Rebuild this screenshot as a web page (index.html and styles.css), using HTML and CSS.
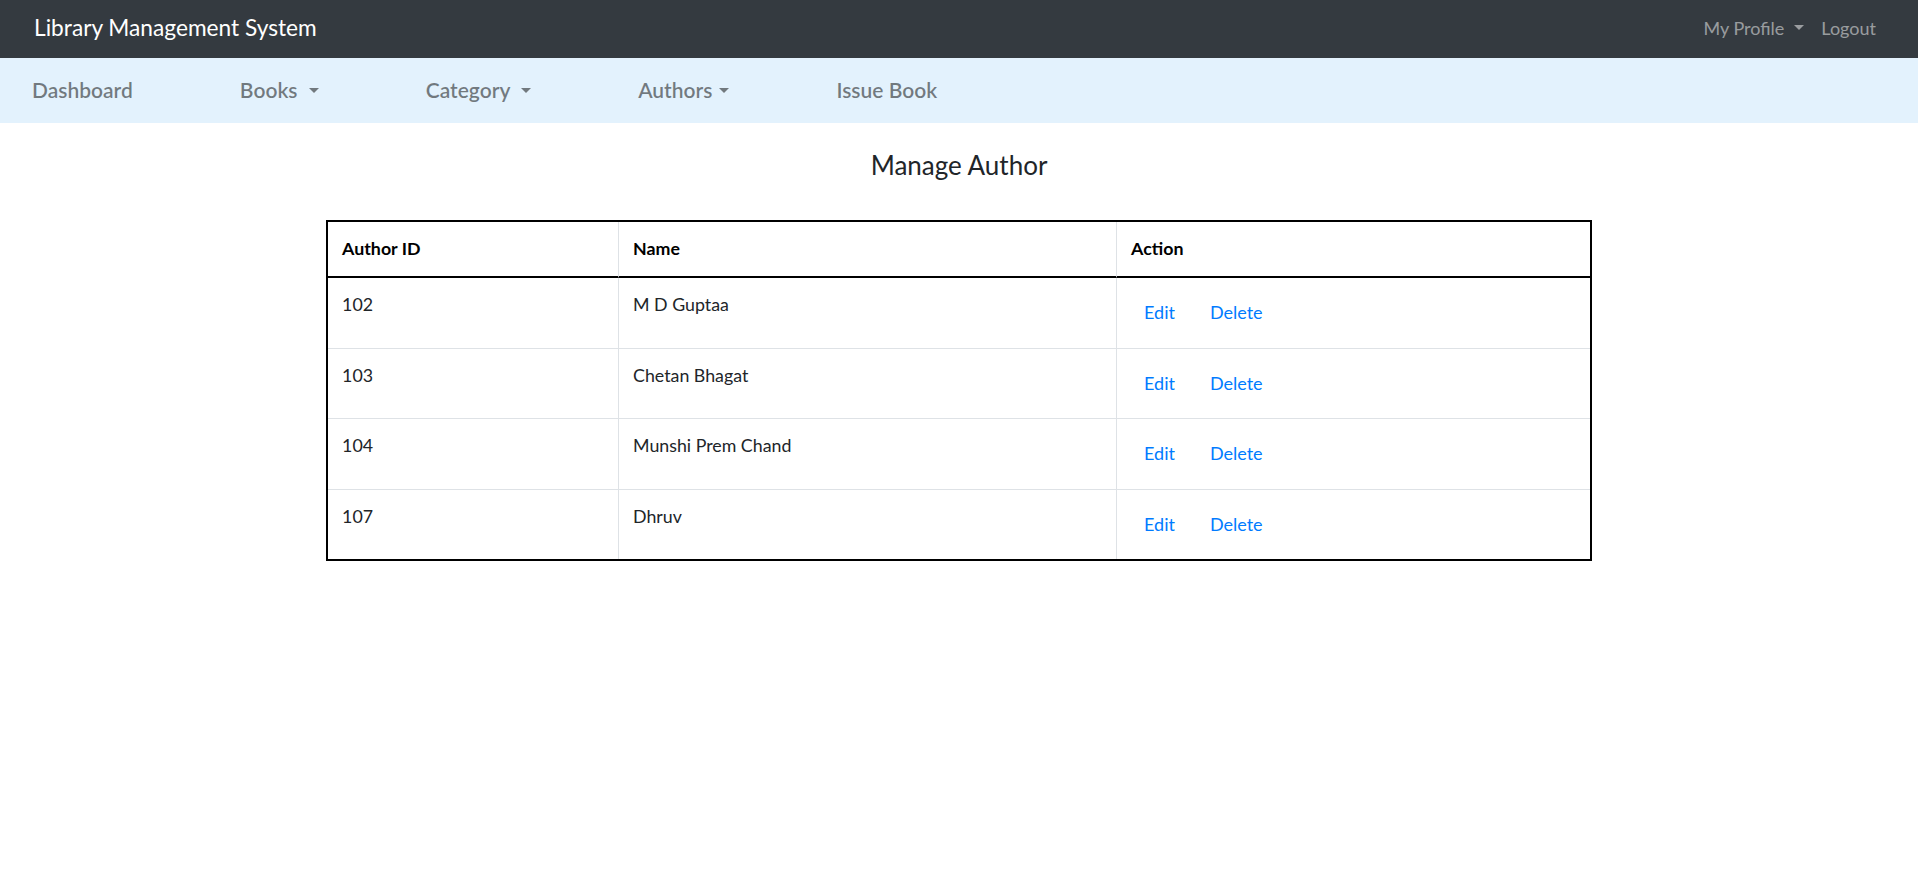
FILE: index.html
```html
<!DOCTYPE html>
<html lang="en">
<head>
<meta charset="utf-8">
<title>Manage Author</title>
<link rel="stylesheet" href="styles.css">
</head>
<body>
<header class="topbar">
  <a class="brand" href="#">Library Management System</a>
  <nav class="user-nav">
    <a class="user-link" href="#">My Profile<span class="caret caret-light"></span></a>
    <a class="user-link" href="#">Logout</a>
  </nav>
</header>
<nav class="menubar">
  <a class="menu-link" href="#">Dashboard</a>
  <a class="menu-link" href="#">Books <span class="caret"></span></a>
  <a class="menu-link" href="#">Category <span class="caret"></span></a>
  <a class="menu-link" href="#">Authors<span class="caret caret-tight"></span></a>
  <a class="menu-link" href="#">Issue Book</a>
</nav>
<main class="content">
  <h1 class="page-title">Manage Author</h1>
  <table class="author-table">
    <colgroup>
      <col class="col-id">
      <col class="col-name">
      <col class="col-action">
    </colgroup>
    <thead>
      <tr><th>Author ID</th><th>Name</th><th>Action</th></tr>
    </thead>
    <tbody>
      <tr>
        <td>102</td><td>M D Guptaa</td>
        <td><div class="actions"><a class="btn-link" href="#">Edit</a><a class="btn-link" href="#">Delete</a></div></td>
      </tr>
      <tr>
        <td>103</td><td>Chetan Bhagat</td>
        <td><div class="actions"><a class="btn-link" href="#">Edit</a><a class="btn-link" href="#">Delete</a></div></td>
      </tr>
      <tr>
        <td>104</td><td>Munshi Prem Chand</td>
        <td><div class="actions"><a class="btn-link" href="#">Edit</a><a class="btn-link" href="#">Delete</a></div></td>
      </tr>
      <tr>
        <td>107</td><td>Dhruv</td>
        <td><div class="actions"><a class="btn-link" href="#">Edit</a><a class="btn-link" href="#">Delete</a></div></td>
      </tr>
    </tbody>
  </table>
</main>
</body>
</html>
```
FILE: styles.css
```css
* { box-sizing: border-box; }
html, body { margin: 0; padding: 0; }
body {
  font-family: Lato, "Open Sans", "Liberation Sans", sans-serif;
  color: #212529;
  background: #fff;
}
a { text-decoration: none; }

.topbar {
  height: 58px;
  background: #343a40;
  display: flex;
  align-items: center;
  justify-content: space-between;
  padding: 0 42px 2px 34px;
}
.brand {
  color: #fff;
  font-size: 22.7px;
  line-height: 30px;
}
.user-nav {
  display: flex;
  align-items: center;
  gap: 17px;
}
.user-link {
  color: rgba(255, 255, 255, 0.5);
  font-size: 18px;
  line-height: 27px;
  display: inline-flex;
  align-items: center;
}

.caret {
  display: inline-block;
  width: 0;
  height: 0;
  margin-left: 6px;
  border-top: 5.5px solid rgba(0, 0, 0, 0.5);
  border-left: 5.5px solid transparent;
  border-right: 5.5px solid transparent;
  vertical-align: 0.2em;
}
.caret-tight { margin-left: 7px; }
.caret-light {
  border-top-color: rgba(255, 255, 255, 0.5);
  border-top-width: 5px;
  border-left-width: 5px;
  border-right-width: 5px;
  margin-left: 10px;
  margin-top: -2px;
}

.menubar {
  height: 65px;
  background: #e3f2fd;
  display: flex;
  align-items: center;
  gap: 107px;
  padding: 0 0 2px 32px;
}
.menu-link {
  color: rgba(0, 0, 0, 0.5);
  font-size: 21px;
  font-weight: 600;
  line-height: 28px;
}

.content { padding-top: 27px; }
.page-title {
  margin: 0 0 39px;
  font-size: 26px;
  font-weight: 400;
  line-height: 1.2;
  text-align: center;
  color: #212529;
}

.author-table {
  width: 66%;
  margin: 0 auto;
  table-layout: fixed;
  border-collapse: separate;
  border-spacing: 0;
  border: 2px solid #000;
  font-size: 17.8px;
  line-height: 24px;
}
.col-id { width: 290px; }
.col-name { width: 498px; }
.author-table th,
.author-table td {
  text-align: left;
  vertical-align: top;
  padding: 14px 14px 17.5px;
}
.author-table th {
  font-weight: 700;
  color: #000;
  padding: 14px 14px 16px;
  border-bottom: 2px solid #000;
}
.author-table td:last-child { padding-top: 15px; padding-bottom: 16.5px; }
.author-table th + th,
.author-table td + td { border-left: 1px solid #dee2e6; }
.author-table tbody tr + tr td { border-top: 1px solid #dee2e6; }

.actions {
  display: flex;
  gap: 9px;
}
.btn-link {
  display: inline-block;
  padding: 6px 12px;
  border: 1px solid transparent;
  color: #007bff;
  font-size: 18px;
  line-height: 24px;
}
```
